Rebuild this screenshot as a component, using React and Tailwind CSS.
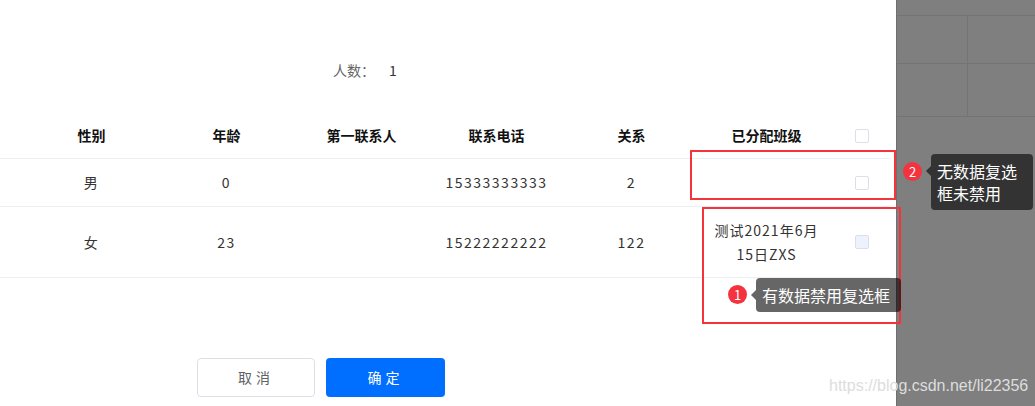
import React from "react";

const cols = ["性别", "年龄", "第一联系人", "联系电话", "关系", "已分配班级"];

const rows = [
  { cells: ["男", "0", "", "15333333333", "2", ""], h: "h-[48px]", disabled: false },
  {
    cells: ["女", "23", "", "15222222222", "122", "class"],
    h: "h-[71px]",
    disabled: true,
  },
];

const Checkbox = ({ disabled }) => (
  <span
    className={`block w-[14px] h-[14px] rounded-[2px] border border-[#dcdfe6] ${
      disabled ? "bg-[#edf2fc]" : "bg-white"
    }`}
  />
);

const Badge = ({ n, className }) => (
  <div
    className={`absolute w-[19px] h-[19px] rounded-full bg-[#f5333f] text-white text-[13px] flex items-center justify-center leading-none ${className}`}
  >
    {n}
  </div>
);

export default function App() {
  return (
    <div
      className="relative w-[1035px] h-[406px] flex overflow-hidden text-[14px] text-[#333]"
      style={{ fontFamily: '"Noto Sans CJK SC", "Noto Sans", sans-serif' }}
    >
      {/* 弹窗主体 */}
      <div className="w-[896px] h-full bg-white flex flex-col">
        <div className="pt-[58px] pl-[333px] flex items-center h-[82px] leading-[24px]">
          <span className="text-[#666]">人数：</span>
          <span className="ml-[14px] text-[#333]">1</span>
        </div>

        <div className="mt-[31px] w-[890px]">
          <div className="grid grid-cols-[24px_repeat(6,135px)_56px] h-[46px] items-center border-b border-[#ebeef5] font-bold text-[#111]">
            <div />
            {cols.map((c) => (
              <div key={c} className="text-center">
                {c}
              </div>
            ))}
            <div className="flex justify-center">
              <Checkbox />
            </div>
          </div>
          {rows.map((r, i) => (
            <div
              key={i}
              className={`grid grid-cols-[24px_repeat(6,135px)_56px] ${r.h} items-center border-b border-[#ebeef5]`}
            >
              <div />
              {r.cells.map((c, j) =>
                c === "class" ? (
                  <div key={j} className="text-center leading-[24px] tracking-[1px]">
                    测试2021年6月
                    <br />
                    15日ZXS
                  </div>
                ) : (
                  <div key={j} className="text-center tracking-[1.5px]">
                    {c}
                  </div>
                )
              )}
              <div className="flex justify-center">
                <Checkbox disabled={r.disabled} />
              </div>
            </div>
          ))}
        </div>

        <div className="mt-[80px] pl-[197px] flex gap-[11px]">
          <button className="w-[118px] h-[39px] rounded-[4px] border border-[#dcdfe6] bg-white text-[#606266] tracking-[4px]">
            取消
          </button>
          <button className="w-[119px] h-[39px] rounded-[4px] bg-[#006eff] text-white tracking-[4px]">
            确定
          </button>
        </div>
      </div>

      {/* 遮罩层 */}
      <div className="flex-1 h-full bg-[#7f7f7f] border-l border-[#6f6f6f] flex flex-col">
        <div className="h-[16px] border-b border-[#747474]" />
        <div className="h-[48px] flex border-b border-[#747474]">
          <div className="w-[71px] border-r border-[#747474]" />
        </div>
        <div className="h-[53px] flex border-b border-[#747474]">
          <div className="w-[71px] border-r border-[#747474]" />
        </div>
      </div>

      {/* 标注 */}
      <div className="absolute left-[690px] top-[150px] w-[206px] h-[50px] border-[2.5px] border-[#f5333a]" />
      <div className="absolute left-[702px] top-[207px] w-[199px] h-[117px] border-[2.5px] border-[#f5333a]" />

      <Badge n="2" className="left-[903px] top-[162px]" />
      <div className="absolute left-[931px] top-[154px] w-[102px] h-[56px] rounded-[4px] bg-black/60 text-white text-[16px] leading-[22px] pl-[6px] pt-[6px]">
        <span className="absolute -left-[5px] top-[12px] w-0 h-0 border-y-[5px] border-y-transparent border-r-[5px] border-r-black/60" />
        无数据复选
        <br />
        框未禁用
      </div>

      <Badge n="1" className="left-[728px] top-[285px]" />
      <div className="absolute left-[756px] top-[278px] w-[145px] h-[34px] rounded-[4px] bg-black/60 text-white text-[16px] leading-[34px] pl-[6px]">
        <span className="absolute -left-[5px] top-[12px] w-0 h-0 border-y-[5px] border-y-transparent border-r-[5px] border-r-black/60" />
        有数据禁用复选框
      </div>

      <div
        className="absolute left-[829px] top-[374px] text-[16px] text-[#dddddd] leading-[24px]"
        style={{ fontFamily: '"Liberation Sans", Arial, sans-serif' }}
      >
        https://blog.csdn.net/li22356
      </div>
    </div>
  );
}
